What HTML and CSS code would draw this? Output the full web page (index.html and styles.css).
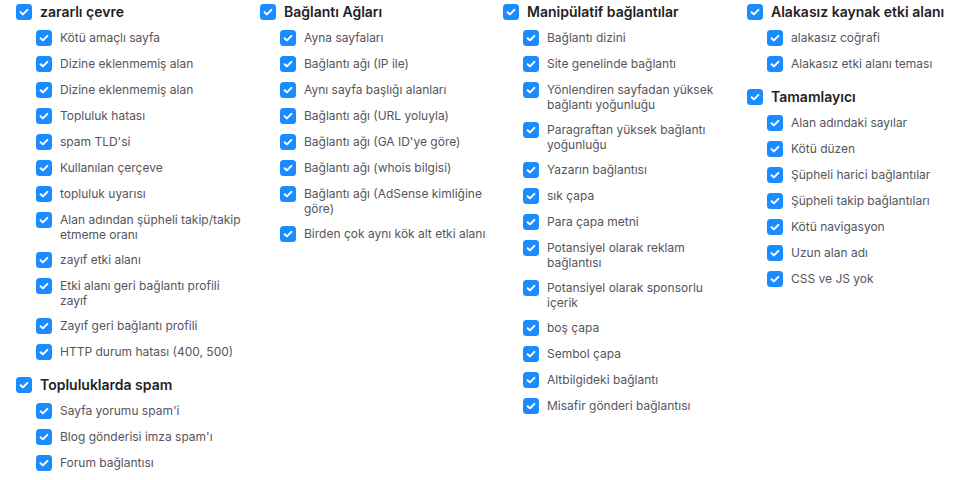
FILE: index.html
```html
<!DOCTYPE html>
<html lang="tr">
<head>
    <meta charset="UTF-8">
    <meta name="viewport" content="width=device-width, initial-scale=1.0">
    <title>Spam sinyalleri</title>
    <link rel="stylesheet" href="styles.css">
</head>
<body>
    <div id="signals" class="columns"></div>
    <script>
        document.addEventListener('DOMContentLoaded', () => {
            const columns = [
                [
                    ['zararlı çevre', ['Kötü amaçlı sayfa', 'Dizine eklenmemiş alan', 'Dizine eklenmemiş alan', 'Topluluk hatası', "spam TLD'si", 'Kullanılan çerçeve', 'topluluk uyarısı', 'Alan adından şüpheli takip/takip etmeme oranı', 'zayıf etki alanı', 'Etki alanı geri bağlantı profili zayıf', 'Zayıf geri bağlantı profili', 'HTTP durum hatası (400, 500)']],
                    ['Topluluklarda spam', ["Sayfa yorumu spam'i", "Blog gönderisi imza spam'ı", 'Forum bağlantısı']]
                ],
                [
                    ['Bağlantı Ağları', ['Ayna sayfaları', 'Bağlantı ağı (IP ile)', 'Aynı sayfa başlığı alanları', 'Bağlantı ağı (URL yoluyla)', "Bağlantı ağı (GA ID'ye göre)", 'Bağlantı ağı (whois bilgisi)', 'Bağlantı ağı (AdSense kimliğine göre)', 'Birden çok aynı kök alt etki alanı']]
                ],
                [
                    ['Manipülatif bağlantılar', ['Bağlantı dizini', 'Site genelinde bağlantı', 'Yönlendiren sayfadan yüksek bağlantı yoğunluğu', 'Paragraftan yüksek bağlantı yoğunluğu', 'Yazarın bağlantısı', 'sık çapa', 'Para çapa metni', 'Potansiyel olarak reklam bağlantısı', 'Potansiyel olarak sponsorlu içerik', 'boş çapa', 'Sembol çapa', 'Altbilgideki bağlantı', 'Misafir gönderi bağlantısı']]
                ],
                [
                    ['Alakasız kaynak etki alanı', ['alakasız coğrafi', 'Alakasız etki alanı teması']],
                    ['Tamamlayıcı', ['Alan adındaki sayılar', 'Kötü düzen', 'Şüpheli harici bağlantılar', 'Şüpheli takip bağlantıları', 'Kötü navigasyon', 'Uzun alan adı', 'CSS ve JS yok']]
                ]
            ];

            const check = '<svg viewBox="0 0 16 16" width="16" height="16"><rect width="16" height="16" rx="3.5" fill="#1a8cff"/><path d="M4.6 8.2l2.3 2.2 4.5-4.5" fill="none" stroke="#fff" stroke-width="2" stroke-linecap="round" stroke-linejoin="round"/></svg>';

            function makeRow(text, className) {
                const row = document.createElement('label');
                row.className = className;
                const box = document.createElement('span');
                box.className = 'box';
                box.innerHTML = check;
                const span = document.createElement('span');
                span.className = 'text';
                span.textContent = text;
                row.appendChild(box);
                row.appendChild(span);
                return row;
            }

            const container = document.getElementById('signals');
            columns.forEach(groups => {
                const col = document.createElement('div');
                col.className = 'column';
                groups.forEach(([title, items]) => {
                    const group = document.createElement('div');
                    group.className = 'group';
                    group.appendChild(makeRow(title, 'group-title'));
                    const list = document.createElement('div');
                    list.className = 'items';
                    items.forEach(item => list.appendChild(makeRow(item, 'item')));
                    group.appendChild(list);
                    col.appendChild(group);
                });
                container.appendChild(col);
            });
        });
    </script>
</body>
</html>
```

FILE: styles.css
```css
body {
    margin: 0;
    background: #ffffff;
    font-family: Inter, "Noto Sans", sans-serif;
    overflow: hidden;
}
.columns {
    display: grid;
    grid-template-columns: 244px 243px 244px 230px;
    padding: 4px 0 0 16px;
}
.group {
    display: flex;
    flex-direction: column;
    gap: 10px;
    margin-bottom: 17px;
}
.items {
    display: flex;
    flex-direction: column;
    gap: 10px;
    padding-left: 20px;
}
.group-title, .item {
    display: flex;
    align-items: flex-start;
    gap: 8px;
}
.box {
    flex: 0 0 16px;
    height: 16px;
    display: block;
}
.box svg {
    display: block;
}
.group-title .text {
    font-size: 14px;
    font-weight: 600;
    line-height: 16px;
    color: #1f1f24;
}
.item .text {
    font-size: 12px;
    line-height: 15px;
    color: #55555c;
    max-width: 190px;
}
```
